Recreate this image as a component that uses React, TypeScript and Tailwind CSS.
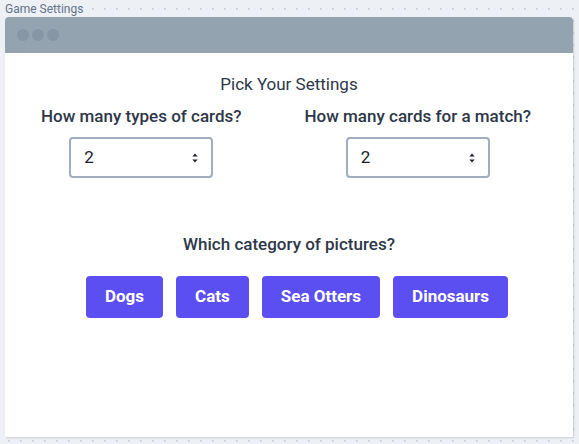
import React from "react";

function Select() {
  return (
    <div className="relative w-[144px] h-[41px] rounded-[4px] border-2 border-[#a0aec0] bg-white flex items-center pl-[13px]">
      <span className="text-[17px] text-[#1a202c]">2</span>
      <svg className="absolute right-[13px] top-1/2 -translate-y-1/2" width="6" height="10" viewBox="0 0 6 10">
        <path d="M3 0.5 L5.6 3.6 H0.4 Z" fill="#1a202c" />
        <path d="M3 9.5 L5.6 6.4 H0.4 Z" fill="#1a202c" />
      </svg>
    </div>
  );
}

export default function App() {
  const cats = ["Dogs", "Cats", "Sea Otters", "Dinosaurs"];
  return (
    <div
      className="w-[579px] h-[444px] bg-[#edf1f5] bg-[radial-gradient(#cfd6de_1px,transparent_1.2px)] bg-[size:12px_12px] bg-[position:3px_3px] relative overflow-hidden"
      style={{ fontFamily: "Roboto, 'Noto Sans', sans-serif" }}
    >
      <div className="pl-[5px] pt-[1px] h-[17px] text-[12px] leading-[16px] text-[#64748b]">Game Settings</div>
      <div className="ml-[5px] w-[568px] h-[420px] bg-white rounded-t-[4px] shadow-[1px_1px_2px_rgba(0,0,0,0.15)] flex flex-col">
        <div className="h-[36px] bg-[#94a3b0] rounded-t-[4px] flex items-center gap-[3px] pl-[12px]">
          <span className="w-[12px] h-[12px] rounded-full bg-[#8796a5]" />
          <span className="w-[12px] h-[12px] rounded-full bg-[#8796a5]" />
          <span className="w-[12px] h-[12px] rounded-full bg-[#8796a5]" />
        </div>
        <div className="flex flex-col items-center pt-[20px] text-[#2d3748]">
          <div className="text-[17px] leading-[22px]">Pick Your Settings</div>
          <div className="w-full flex justify-between pl-[36px] pr-[42px] mt-[10px]">
            <div className="flex flex-col items-center gap-[10px]">
              <div className="text-[17px] font-medium leading-[22px]">How many types of cards?</div>
              <Select />
            </div>
            <div className="flex flex-col items-center gap-[10px]">
              <div className="text-[17px] font-medium leading-[22px]">How many cards for a match?</div>
              <Select />
            </div>
          </div>
          <div className="mt-[55px] text-[17px] font-medium leading-[22px]">Which category of pictures?</div>
          <div className="flex gap-[13px] mt-[21px] pl-[16px]">
            {cats.map((c) => (
              <button
                key={c}
                className="h-[42px] px-[19px] rounded-[4px] bg-[#5b4ff2] text-white text-[17px] font-bold"
              >
                {c}
              </button>
            ))}
          </div>
        </div>
      </div>
    </div>
  );
}
